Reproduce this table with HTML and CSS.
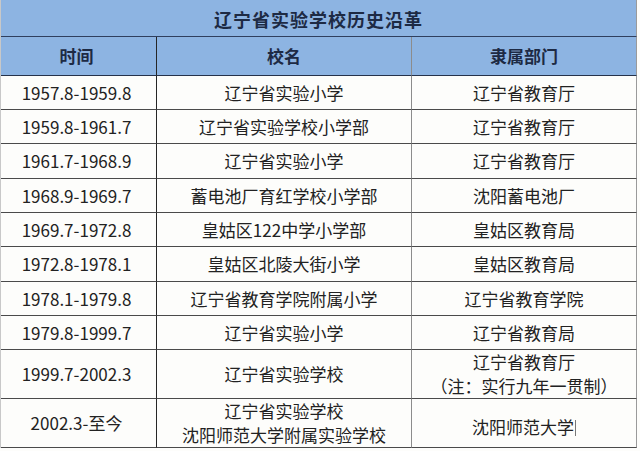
FILE: index.html
```html
<!DOCTYPE html>
<html lang="zh">
<head>
<meta charset="utf-8">
<title>辽宁省实验学校历史沿革</title>
<link rel="stylesheet" href="styles.css">
</head>
<body>
<table class="history">
  <colgroup>
    <col class="c-time">
    <col class="c-name">
    <col class="c-dept">
  </colgroup>
  <tr class="r-title"><th colspan="3" class="title">辽宁省实验学校历史沿革</th></tr>
  <tr class="r-head"><th class="col1">时间</th><th class="col2">校名</th><th class="col3">隶属部门</th></tr>
  <tr class="r34"><td class="col1">1957.8-1959.8</td><td class="col2">辽宁省实验小学</td><td class="col3">辽宁省教育厅</td></tr>
  <tr class="r34"><td class="col1">1959.8-1961.7</td><td class="col2">辽宁省实验学校小学部</td><td class="col3">辽宁省教育厅</td></tr>
  <tr class="r35"><td class="col1">1961.7-1968.9</td><td class="col2">辽宁省实验小学</td><td class="col3">辽宁省教育厅</td></tr>
  <tr class="r34"><td class="col1">1968.9-1969.7</td><td class="col2">蓄电池厂育红学校小学部</td><td class="col3">沈阳蓄电池厂</td></tr>
  <tr class="r34"><td class="col1">1969.7-1972.8</td><td class="col2">皇姑区122中学小学部</td><td class="col3">皇姑区教育局</td></tr>
  <tr class="r35"><td class="col1">1972.8-1978.1</td><td class="col2">皇姑区北陵大街小学</td><td class="col3">皇姑区教育局</td></tr>
  <tr class="r34"><td class="col1">1978.1-1979.8</td><td class="col2">辽宁省教育学院附属小学</td><td class="col3">辽宁省教育学院</td></tr>
  <tr class="r34"><td class="col1">1979.8-1999.7</td><td class="col2">辽宁省实验小学</td><td class="col3">辽宁省教育局</td></tr>
  <tr class="r49"><td class="col1">1999.7-2002.3</td><td class="col2">辽宁省实验学校</td><td class="col3">辽宁省教育厅<br>（注：实行九年一贯制）</td></tr>
  <tr class="r49"><td class="col1">2002.3-至今</td><td class="col2">辽宁省实验学校<br>沈阳师范大学附属实验学校</td><td class="col3 last">沈阳师范大学<span class="caret"></span></td></tr>
</table>
</body>
</html>
```

FILE: styles.css
```css
html, body {
  margin: 0;
  padding: 0;
  background: #fdfdfb;
}

body {
  width: 640px;
  height: 451px;
  overflow: hidden;
  font-family: "Noto Sans CJK SC", "Noto Sans", sans-serif;
  color: #222;
}

.history {
  border-collapse: separate;
  border-spacing: 0;
  table-layout: fixed;
  width: 637px;
  border-left: 1px solid #c8c8c8;
}

.c-time { width: 156px; }
.c-name { width: 255px; }
.c-dept { width: 225px; }

.history th,
.history td {
  padding: 0;
  text-align: center;
  vertical-align: middle;
  font-size: 17px;
  line-height: 24px;
  border-bottom: 1px solid #4a4a4a;
  white-space: nowrap;
  box-sizing: border-box;
}

.history th {
  background: #8db4e2;
  color: #1d2a44;
  font-weight: bold;
}

.title {
  font-size: 18px !important;
  letter-spacing: 1px;
  height: 37px;
  border-bottom: 1px solid #2f3f5e !important;
  border-right: 1px solid #9a9a9a;
  padding-top: 1px !important;
}

.r-title { height: 37px; }
.r-head { height: 39px; }
.r-head th { border-bottom: 1px solid #26324a; }
.r34 { height: 34px; }
.r35 { height: 35px; }
.r49 { height: 49px; }

.col1 {
  border-right: 1px solid #262626;
  padding-right: 4px !important;
}
.col2 { border-right: 1px solid #8c8c8c; }
.col3 { border-right: 1px solid #9a9a9a; }

.last { padding-top: 8px !important; }

.caret {
  display: inline-block;
  width: 1px;
  height: 16px;
  background: #777;
  margin-left: 1px;
  vertical-align: -2px;
}
```
